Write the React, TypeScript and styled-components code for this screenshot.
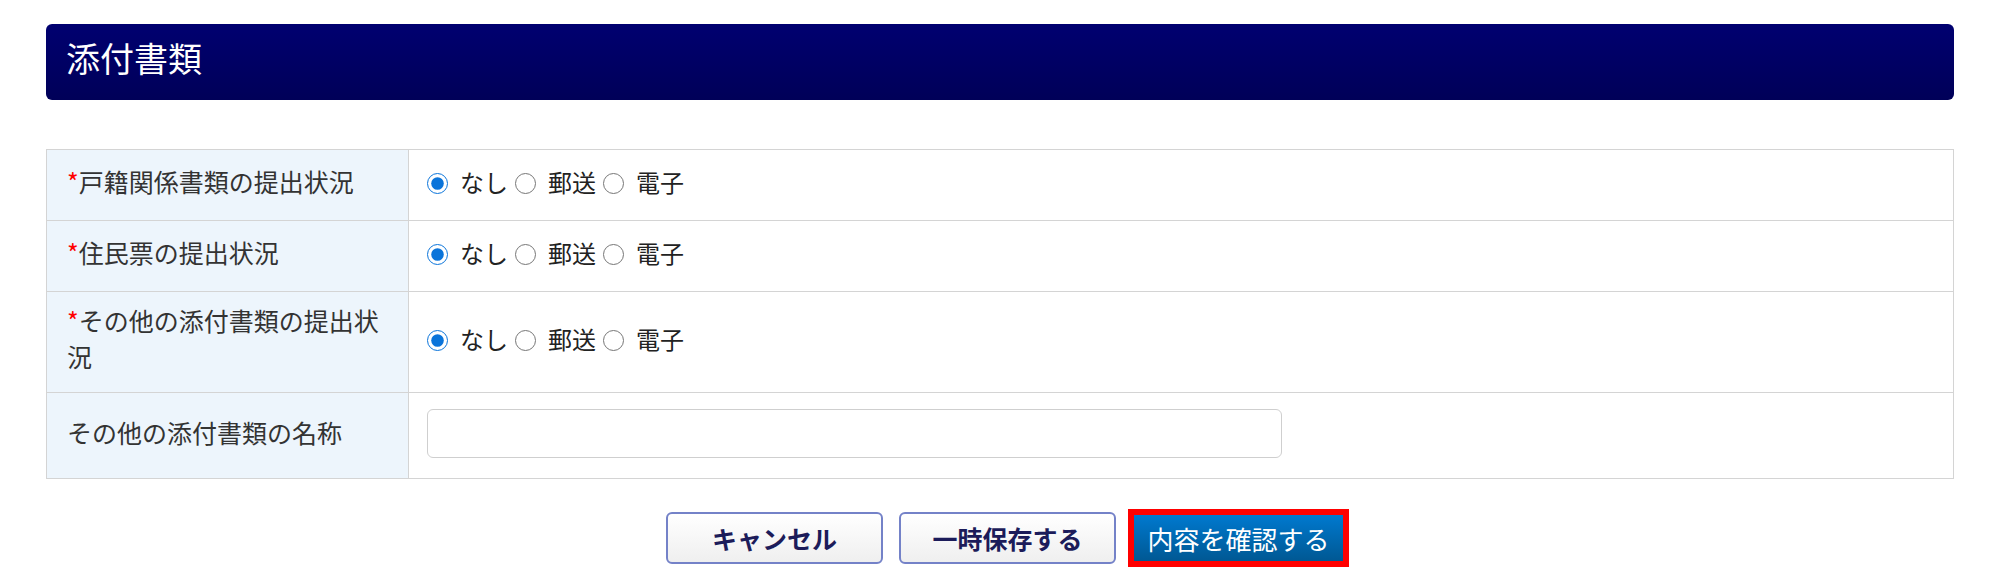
import styled, { createGlobalStyle } from "styled-components";

const GlobalStyle = createGlobalStyle`
  body {
    margin: 0;
    background: #fff;
    font-family: "Noto Sans CJK JP", "Noto Sans", sans-serif;
  }
`;

const Page = styled.div`
  padding: 24px 46px 20px;
`;

const SectionHeader = styled.div`
  height: 76px;
  box-sizing: border-box;
  display: flex;
  align-items: center;
  padding: 0 20px 9px;
  border-radius: 6px;
  background: linear-gradient(to bottom, #000070 0%, #000058 100%);
  color: #fff;
  font-size: 34px;
`;

const FormTable = styled.table`
  width: 100%;
  margin-top: 49px;
  border-collapse: collapse;
  border: 1px solid #d4d4d4;
`;

const Row = styled.tr`
  border-bottom: 1px solid #d4d4d4;
`;

const LabelCell = styled.th`
  width: 321px;
  padding: 10px 20px 18px;
  background: #edf5fc;
  border-right: 1px solid #d4d4d4;
  text-align: left;
  vertical-align: middle;
  font-weight: normal;
  font-size: 25px;
  line-height: 36px;
  color: #333;
`;

const Required = styled.span`
  color: #ff0000;
`;

const ValueCell = styled.td<{ $shift?: boolean }>`
  padding: ${(p) => (p.$shift ? "10px 18px 18px" : "14px 18px")};
  vertical-align: middle;
`;

const RadioGroup = styled.div`
  display: flex;
  align-items: center;
  min-height: 42px;
  font-size: 24px;
  color: #222;
`;

const RadioLabel = styled.label`
  display: inline-flex;
  align-items: center;
  gap: 12px;
  margin-right: 7px;
`;

const Radio = styled.input`
  width: 21px;
  height: 21px;
  margin: 4px 0 0;
  accent-color: #0a74da;
`;

const TextInput = styled.input`
  display: block;
  width: 855px;
  height: 49px;
  box-sizing: border-box;
  margin: 2px 0 6px;
  border: 1px solid #cfcfcf;
  border-radius: 6px;
  font-size: 22px;
  padding: 0 12px;
`;

const ButtonRow = styled.div`
  display: flex;
  justify-content: center;
  align-items: center;
  margin-top: 30px;
  padding-left: 15px;
`;

const SubButton = styled.button`
  width: 217px;
  height: 52px;
  margin-right: 16px;
  border: 2px solid #7482c8;
  border-radius: 6px;
  background: linear-gradient(to bottom, #ffffff 0%, #efefef 100%);
  color: #1c1c5a;
  font-family: inherit;
  font-size: 25px;
  font-weight: bold;
`;

const ConfirmButton = styled.button`
  width: 221px;
  height: 58px;
  margin-left: -4px;
  border: 6px solid #ff0000;
  background: linear-gradient(to bottom, #0079cf 0%, #005893 100%);
  color: #fff;
  font-family: inherit;
  font-size: 26px;
`;

const choices = ["なし", "郵送", "電子"];

const RadioField = ({ name }: { name: string }) => (
  <RadioGroup>
    {choices.map((c, i) => (
      <RadioLabel key={c}>
        <Radio type="radio" name={name} defaultChecked={i === 0} />
        {c}
      </RadioLabel>
    ))}
  </RadioGroup>
);

export default function App() {
  return (
    <>
      <GlobalStyle />
      <Page>
        <SectionHeader>添付書類</SectionHeader>
        <FormTable>
          <tbody>
            <Row>
              <LabelCell>
                <Required>*</Required>戸籍関係書類の提出状況
              </LabelCell>
              <ValueCell $shift>
                <RadioField name="koseki" />
              </ValueCell>
            </Row>
            <Row>
              <LabelCell>
                <Required>*</Required>住民票の提出状況
              </LabelCell>
              <ValueCell $shift>
                <RadioField name="juminhyo" />
              </ValueCell>
            </Row>
            <Row>
              <LabelCell>
                <Required>*</Required>その他の添付書類の提出状況
              </LabelCell>
              <ValueCell $shift>
                <RadioField name="sonota" />
              </ValueCell>
            </Row>
            <Row>
              <LabelCell>その他の添付書類の名称</LabelCell>
              <ValueCell>
                <TextInput type="text" />
              </ValueCell>
            </Row>
          </tbody>
        </FormTable>
        <ButtonRow>
          <SubButton>キャンセル</SubButton>
          <SubButton>一時保存する</SubButton>
          <ConfirmButton>内容を確認する</ConfirmButton>
        </ButtonRow>
      </Page>
    </>
  );
}
